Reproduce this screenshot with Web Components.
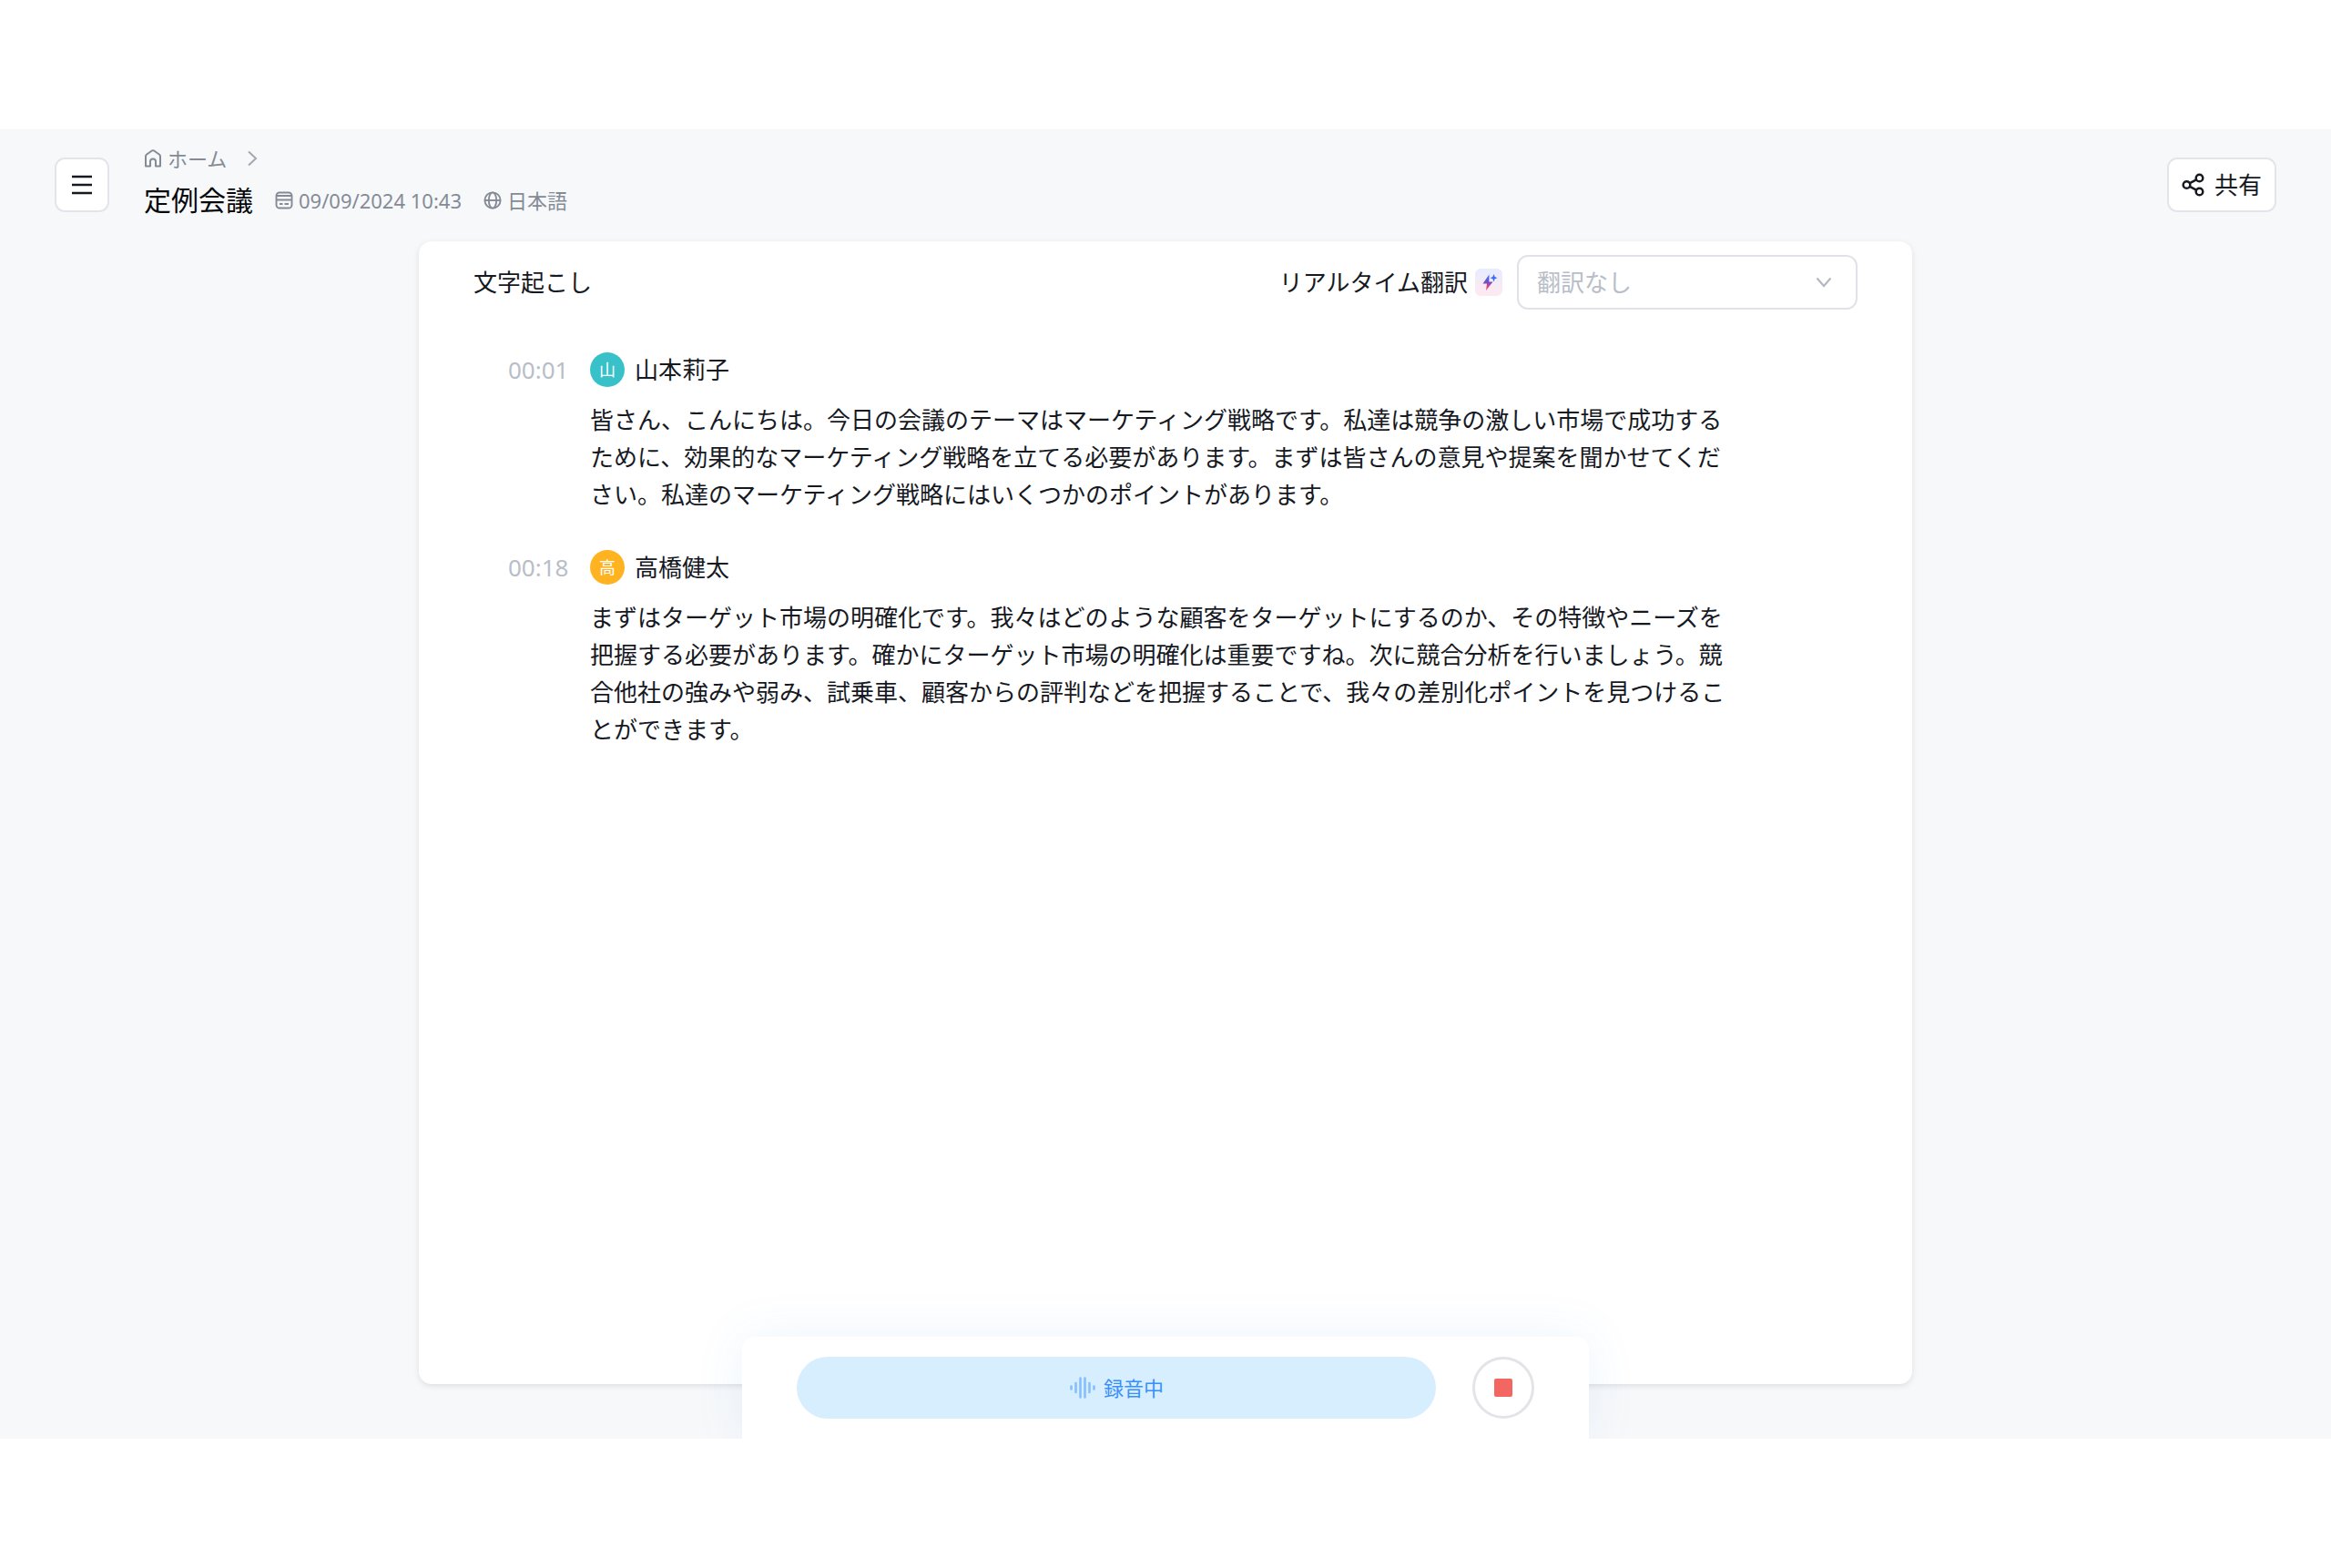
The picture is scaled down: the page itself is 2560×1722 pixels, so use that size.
<!DOCTYPE html>
<html lang="ja">
<head>
<meta charset="utf-8">
<title>定例会議</title>
<style>
  body {
    margin: 0;
    background: #fff;
    color: #16191f;
    font-family: "Noto Sans", "Noto Sans CJK JP", sans-serif;
    font-size: 26px;
    line-height: 41px;
  }
</style>
</head>
<body>
<meeting-app>
  <meeting-header slot="header" heading="定例会議" date="09/09/2024 10:43" language="日本語"></meeting-header>
  <transcript-card>
    <transcript-entry time="00:01" name="山本莉子" style="--avatar: #38c1c9">皆さん、こんにちは。今日の会議のテーマはマーケティング戦略です。私達は競争の激しい市場で成功するために、効果的なマーケティング戦略を立てる必要があります。まずは皆さんの意見や提案を聞かせてください。私達のマーケティング戦略にはいくつかのポイントがあります。</transcript-entry>
    <transcript-entry time="00:18" name="高橋健太" style="--avatar: #ffb320">まずはターゲット市場の明確化です。我々はどのような顧客をターゲットにするのか、その特徴やニーズを把握する必要があります。確かにターゲット市場の明確化は重要ですね。次に競合分析を行いましょう。競合他社の強みや弱み、試乗車、顧客からの評判などを把握することで、我々の差別化ポイントを見つけることができます。</transcript-entry>
  </transcript-card>
  <recorder-bar slot="recorder">録音中</recorder-bar>
</meeting-app>

<script>
const define = (name, render) => customElements.define(name, class extends HTMLElement {
  connectedCallback() {
    if (this.shadowRoot) return;
    const template = document.createElement('template');
    template.innerHTML = '<style>*{box-sizing:border-box}button,select{font:inherit;color:inherit;margin:0}svg{display:block;flex:none}</style>' + render(this);
    this.attachShadow({ mode: 'open' }).append(template.content);
  }
});

const icons = {
  menu: '<svg width="24" height="24" viewBox="0 0 24 24" fill="none" stroke="currentColor" stroke-width="2.6"><path d="M1 3h22M1 12h22M1 21h22"/></svg>',
  home: '<svg width="20" height="20" viewBox="0 0 20 20" fill="none" stroke="currentColor" stroke-width="2" stroke-linejoin="round"><path d="M2 7.500Q2 6.400 2.900 5.700L8.500 1.700Q10 .8 11.500 1.700L17.100 5.700Q18 6.400 18 7.500V18.500H13V13.500A3 3 0 0 0 7 13.500V18.500H2Z"/></svg>',
  next: '<svg width="20" height="20" viewBox="0 0 20 20" fill="none" stroke="#a3a9b3" stroke-width="2"><path d="M6 2.500 14 10 6 17.500"/></svg>',
  date: '<svg width="20" height="20" viewBox="0 0 20 20" fill="none" stroke="currentColor" stroke-width="1.900"><rect x="1.500" y="1.500" width="17" height="17" rx="3.500"/><path d="M1.500 5H18.500M1.500 9.500H18.500M5 14H8.500M10.500 14H15"/></svg>',
  globe: '<svg width="20" height="20" viewBox="0 0 20 20" fill="none" stroke="currentColor" stroke-width="1.900"><circle cx="10" cy="10" r="8.600"/><ellipse cx="10" cy="10" rx="4.200" ry="8.600"/><path d="M1.400 10H18.600"/></svg>',
  share: '<svg width="26" height="26" viewBox="0 0 26 26" fill="none" stroke="currentColor" stroke-width="2.500"><circle cx="5.500" cy="13" r="3.800"/><circle cx="19.500" cy="5.500" r="3.800"/><circle cx="19.500" cy="20.500" r="3.800"/><path d="M8.900 11.200 16.100 7.300M8.900 14.800 16.100 18.700"/></svg>',
  spark: '<svg width="22" height="22" viewBox="0 0 22 22"><defs><linearGradient id="g" x1="0" y1="0" x2="0" y2="1"><stop offset=".15" stop-color="#3c6cf8"/><stop offset=".5" stop-color="#7a4bc0"/><stop offset=".85" stop-color="#fb4468"/></linearGradient></defs><path fill="url(#g)" d="M11.500 2.500 4.500 12.500H9L8 20 15.500 10.500H11.300Z"/><path fill="#3c6cf8" d="M16.500 2 17.700 5.100 20.500 6.200 17.700 7.300 16.500 10.400 15.300 7.300 12.500 6.200 15.300 5.100Z"/></svg>',
  down: '<svg width="20" height="20" viewBox="0 0 20 20" fill="none" stroke="#b4b9c2" stroke-width="2.200"><path d="M2.500 5.500 10 14 17.500 5.500"/></svg>',
  wave: '<svg width="30" height="24" viewBox="0 0 30 24" fill="none" stroke="#86bffb" stroke-width="2.600" stroke-linecap="round"><path d="M2.500 10.500V13.500M7.500 7V17M12.500 1.500V22.500M17.500 1.500V22.500M22.500 7V17M27.500 10.500V13.500"/></svg>'
};

define('meeting-app', () => `
  <style>
    :host { display: block; padding: 142px 0; }
    .surface { background: #f7f8fa; display: flex; flex-direction: column; min-height: 1438px; overflow: hidden; }
    main { flex: 1; display: grid; grid-template: 1fr / 1fr; padding: 0 60px; }
    .card { grid-area: 1 / 1; display: flex; justify-content: center; padding-bottom: 60px; }
    .recorder { grid-area: 1 / 1; align-self: end; justify-self: center; z-index: 1; width: 100%; max-width: 930px; }
  </style>
  <div class="surface">
    <slot name="header"></slot>
    <main>
      <div class="card"><slot></slot></div>
      <div class="recorder"><slot name="recorder"></slot></div>
    </main>
  </div>`);

define('meeting-header', el => `
  <style>
    :host { display: block; }
    header { display: flex; align-items: center; padding: 14px 60px 15px; height: 123px; }
    button { display: flex; align-items: center; justify-content: center; gap: 10px; height: 60px; padding: 0 14px; border: 2px solid #e4e5eb; border-radius: 11px; background: #fff; }
    .menu { width: 60px; padding: 0; }
    .titles { flex: 1; padding: 0 0 6px 38px; display: flex; flex-direction: column; gap: 4px; }
    nav, .meta { display: flex; align-items: center; color: #848b96; font-size: 22px; line-height: 36px; }
    a { display: flex; align-items: center; gap: 6px; color: inherit; text-decoration: none; margin-right: 18px; }
    .line { display: flex; align-items: center; gap: 24px; }
    h1 { margin: 0; font-size: 30px; line-height: 48px; font-weight: 400; color: #06080c; }
    .meta { gap: 6px; }
  </style>
  <header>
    <button class="menu" type="button" aria-label="メニュー">${icons.menu}</button>
    <div class="titles">
      <nav><a href="#">${icons.home}ホーム</a>${icons.next}</nav>
      <div class="line">
        <h1>${el.getAttribute('heading')}</h1>
        <span class="meta">${icons.date}<span>${el.getAttribute('date')}</span></span>
        <span class="meta">${icons.globe}<span>${el.getAttribute('language')}</span></span>
      </div>
    </div>
    <button type="button">${icons.share}<span>共有</span></button>
  </header>`);

define('transcript-card', () => `
  <style>
    :host { display: block; width: 100%; max-width: 1640px; background: #fff; border-radius: 14px; box-shadow: 0 2px 6px rgba(30, 40, 50, .12); }
    .bar { display: flex; align-items: center; padding: 15px 60px 0; }
    h2 { flex: 1; margin: 0; font-size: 26px; font-weight: 400; }
    .badge { display: flex; align-items: center; justify-content: center; width: 30px; height: 30px; margin: 0 16px 0 8px; border-radius: 6px; background: linear-gradient(#e7ecff, #ffe9ef); }
    .field { display: grid; align-items: center; width: 374px; }
    select, .field svg { grid-area: 1 / 1; }
    .field svg { justify-self: end; margin-right: 27px; pointer-events: none; }
    select { appearance: none; width: 100%; height: 60px; padding: 0 60px 0 20px; border: 2px solid #e0e2e8; border-radius: 12px; background: #fff; color: #b8bec8; }
    .entries { display: flex; flex-direction: column; gap: 40px; padding: 47px 190px 60px 98px; }
  </style>
  <div class="bar">
    <h2>文字起こし</h2>
    <label for="translation">リアルタイム翻訳</label>
    <span class="badge">${icons.spark}</span>
    <div class="field">
      <select id="translation"><option>翻訳なし</option></select>
      ${icons.down}
    </div>
  </div>
  <div class="entries"><slot></slot></div>`);

define('transcript-entry', el => `
  <style>
    :host { display: grid; grid-template-columns: 90px 1fr; row-gap: 16px; }
    time { color: #b8bec8; line-height: 38px; }
    .speaker { display: flex; align-items: center; gap: 11px; line-height: 38px; }
    .avatar { width: 38px; height: 38px; border-radius: 50%; background: var(--avatar); color: #fff; font-size: 18px; text-align: center; }
    p { grid-column: 2; margin: 0; }
  </style>
  <time>${el.getAttribute('time')}</time>
  <div class="speaker"><span class="avatar">${el.getAttribute('name')[0]}</span><span>${el.getAttribute('name')}</span></div>
  <p><slot></slot></p>`);

define('recorder-bar', () => `
  <style>
    :host { display: flex; gap: 40px; padding: 22px 60px; background: #fff; border-radius: 14px 14px 0 0; box-shadow: 0 0 56px rgba(60, 140, 220, .09); }
    button { border: 0; height: 68px; padding: 0; display: flex; align-items: center; justify-content: center; }
    .state { flex: 1; gap: 8px; border-radius: 34px; background: #d6eefe; color: #3a90f7; font-size: 22px; }
    .stop { width: 68px; border: 3px solid #e2e4e8; border-radius: 50%; background: #fff; }
    .stop span { width: 20px; height: 20px; border-radius: 2px; background: #f46661; }
  </style>
  <button class="state" type="button">${icons.wave}<span><slot></slot></span></button>
  <button class="stop" type="button" aria-label="停止"><span></span></button>`);
</script>
</body>
</html>
